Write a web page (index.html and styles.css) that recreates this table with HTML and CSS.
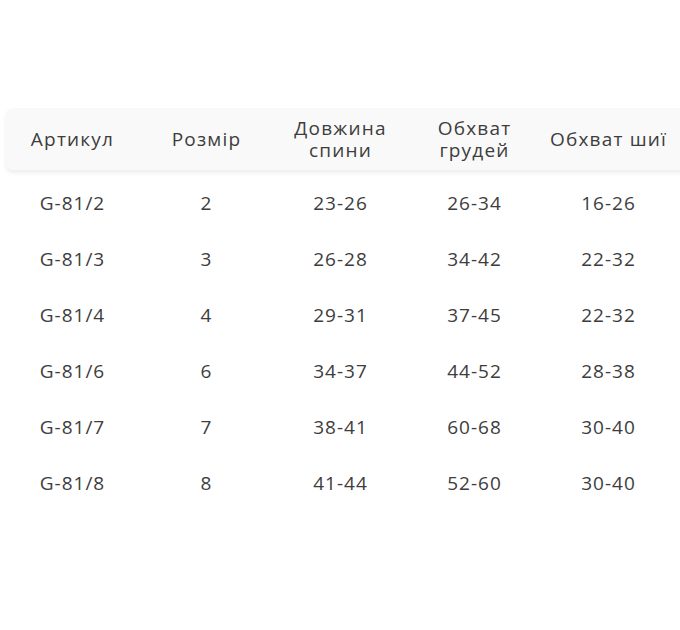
FILE: index.html
```html
<!DOCTYPE html>
<html lang="uk">
<head>
<meta charset="utf-8">
<link rel="stylesheet" href="styles.css">
</head>
<body>
<div class="page">
  <div class="table">
    <div class="head">
      <div class="cell">Артикул</div>
      <div class="cell">Розмір</div>
      <div class="cell">Довжина<br>спини</div>
      <div class="cell">Обхват<br>грудей</div>
      <div class="cell">Обхват шиї</div>
    </div>
    <div class="row"><div class="cell">G-81/2</div><div class="cell">2</div><div class="cell">23-26</div><div class="cell">26-34</div><div class="cell">16-26</div></div>
    <div class="row"><div class="cell">G-81/3</div><div class="cell">3</div><div class="cell">26-28</div><div class="cell">34-42</div><div class="cell">22-32</div></div>
    <div class="row"><div class="cell">G-81/4</div><div class="cell">4</div><div class="cell">29-31</div><div class="cell">37-45</div><div class="cell">22-32</div></div>
    <div class="row"><div class="cell">G-81/6</div><div class="cell">6</div><div class="cell">34-37</div><div class="cell">44-52</div><div class="cell">28-38</div></div>
    <div class="row"><div class="cell">G-81/7</div><div class="cell">7</div><div class="cell">38-41</div><div class="cell">60-68</div><div class="cell">30-40</div></div>
    <div class="row"><div class="cell">G-81/8</div><div class="cell">8</div><div class="cell">41-44</div><div class="cell">52-60</div><div class="cell">30-40</div></div>
  </div>
</div>
</body>
</html>
```
FILE: styles.css
```css
html, body {
  margin: 0;
  padding: 0;
  background: #ffffff;
}
.page {
  width: 680px;
  height: 630px;
  overflow: hidden;
  padding-top: 108px;
  box-sizing: border-box;
  font-family: "Open Sans", "Noto Sans", sans-serif;
  font-size: 19px;
  letter-spacing: 1px;
  color: #3d3d3d;
}
.table {
  margin-left: 6px;
  width: 720px;
}
.head {
  display: grid;
  grid-template-columns: repeat(5, 134px) 1fr;
  align-items: center;
  height: 62px;
  background: #f9f9f9;
  border-radius: 7px;
  box-shadow: 0 3px 4px rgba(0, 0, 0, 0.07);
  line-height: 22px;
  letter-spacing: 1.2px;
  margin-bottom: 5px;
}
.row {
  display: grid;
  grid-template-columns: repeat(5, 134px) 1fr;
  align-items: center;
  height: 56px;
}
.cell {
  text-align: center;
  margin-left: -1px;
  white-space: nowrap;
}
```
